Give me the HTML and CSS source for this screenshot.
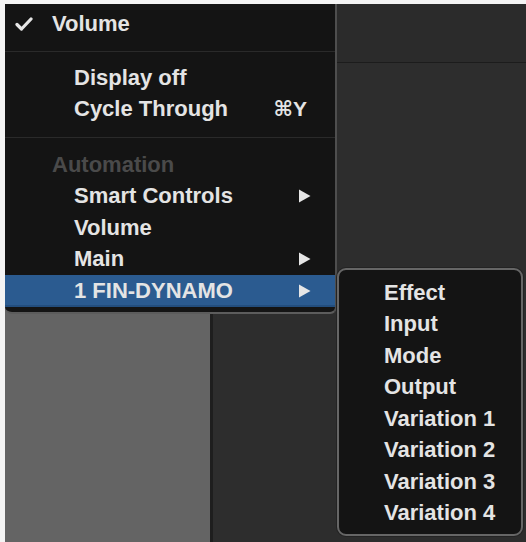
FILE: index.html
```html
<!DOCTYPE html>
<html>
<head>
<meta charset="utf-8">
<link rel="stylesheet" href="styles.css">
</head>
<body>
<div class="screen">
	<div class="side"></div>
	<div class="main">
		<div class="toolbar"></div>
	</div>

	<div class="menu context">
		<div class="item checked">
			<svg class="check" width="18" height="14" viewBox="0 0 18 14"><path d="M 2 7.5 L 6.5 12 L 16 2" fill="none" stroke="#e6e6e6" stroke-width="3.2" stroke-linecap="round" stroke-linejoin="round" /></svg>
			<span class="label">Volume</span>
		</div>
		<div class="separator"></div>
		<div class="item"><span class="label">Display off</span></div>
		<div class="item"><span class="label">Cycle Through</span><span class="shortcut">⌘Y</span></div>
		<div class="separator wide"></div>
		<div class="item heading"><span class="label">Automation</span></div>
		<div class="item"><span class="label">Smart Controls</span><svg class="arrow" width="13" height="14" viewBox="0 0 13 14"><path d="M 1 0.5 L 12.5 7 L 1 13.5 Z" fill="#e6e6e6" /></svg></div>
		<div class="item"><span class="label">Volume</span></div>
		<div class="item"><span class="label">Main</span><svg class="arrow" width="13" height="14" viewBox="0 0 13 14"><path d="M 1 0.5 L 12.5 7 L 1 13.5 Z" fill="#e6e6e6" /></svg></div>
		<div class="item selected"><span class="label">1 FIN-DYNAMO</span><svg class="arrow" width="13" height="14" viewBox="0 0 13 14"><path d="M 1 0.5 L 12.5 7 L 1 13.5 Z" fill="#e6e6e6" /></svg></div>
	</div>

	<div class="menu submenu">
		<div class="item"><span class="label">Effect</span></div>
		<div class="item"><span class="label">Input</span></div>
		<div class="item"><span class="label">Mode</span></div>
		<div class="item"><span class="label">Output</span></div>
		<div class="item"><span class="label">Variation 1</span></div>
		<div class="item"><span class="label">Variation 2</span></div>
		<div class="item"><span class="label">Variation 3</span></div>
		<div class="item"><span class="label">Variation 4</span></div>
	</div>
</div>
</body>
</html>
```

FILE: styles.css
```css
body
{
	margin: 0;
	background: #f4f4f4;
	font-family: "Liberation Sans", Arial, "DejaVu Sans", sans-serif;
	overflow: hidden;
}

/* window behind the menus */
.screen
{
	position: relative;
	display: flex;
	height: 538px;
	margin: 4px 0 0 5px;
	background: #2c2c2c;
}
.side
{
	width: 205px;
	background: #646464;
	border-right: 3px solid #1e1e1e;
}
.main
{
	flex: 1;
	background: #2d2d2d;
}
.toolbar
{
	height: 58px;
	background: #2b2b2b;
	border-bottom: 1px solid #1c1c1c;
}

/* popup menus */
.menu
{
	position: absolute;
	box-sizing: border-box;
	background: #141414;
	color: #e4e4e4;
	font-size: 22px;
	font-weight: bold;
}
.context
{
	left: 0;
	top: 0;
	width: 332px;
	height: 310px;
	padding-top: 4px;
	border-right: 2px solid #4e4e4e;
	border-bottom: 2px solid #5c5c5c;
	border-radius: 0 0 7px 7px;
}
.submenu
{
	left: 332px;
	top: 264px;
	width: 186px;
	height: 268px;
	padding-top: 7px;
	border: 2px solid #666666;
	border-radius: 9px;
	box-shadow: 0 0 0 1px #232323;
}
.item
{
	display: flex;
	align-items: center;
	height: 31.5px;
	padding: 0 24px 0 69px;
}
.item .label
{
	flex: 1;
	white-space: nowrap;
}
.submenu .item
{
	padding-left: 45px;
}
.checked
{
	padding-left: 10px;
}
.check
{
	margin-right: 19px;
}
.heading
{
	padding-left: 47px;
	color: #4a4a4a;
}
.shortcut
{
	margin-right: 4px;
	font-size: 21px;
}
.selected
{
	background: #2b5b90;
	box-shadow: inset 0 -2px 0 #234e7e;
}
.separator
{
	height: 1px;
	margin: 11px 0 10.5px;
	background: #2a2a2a;
}
.separator.wide
{
	margin: 12px 0 11px;
}
```
